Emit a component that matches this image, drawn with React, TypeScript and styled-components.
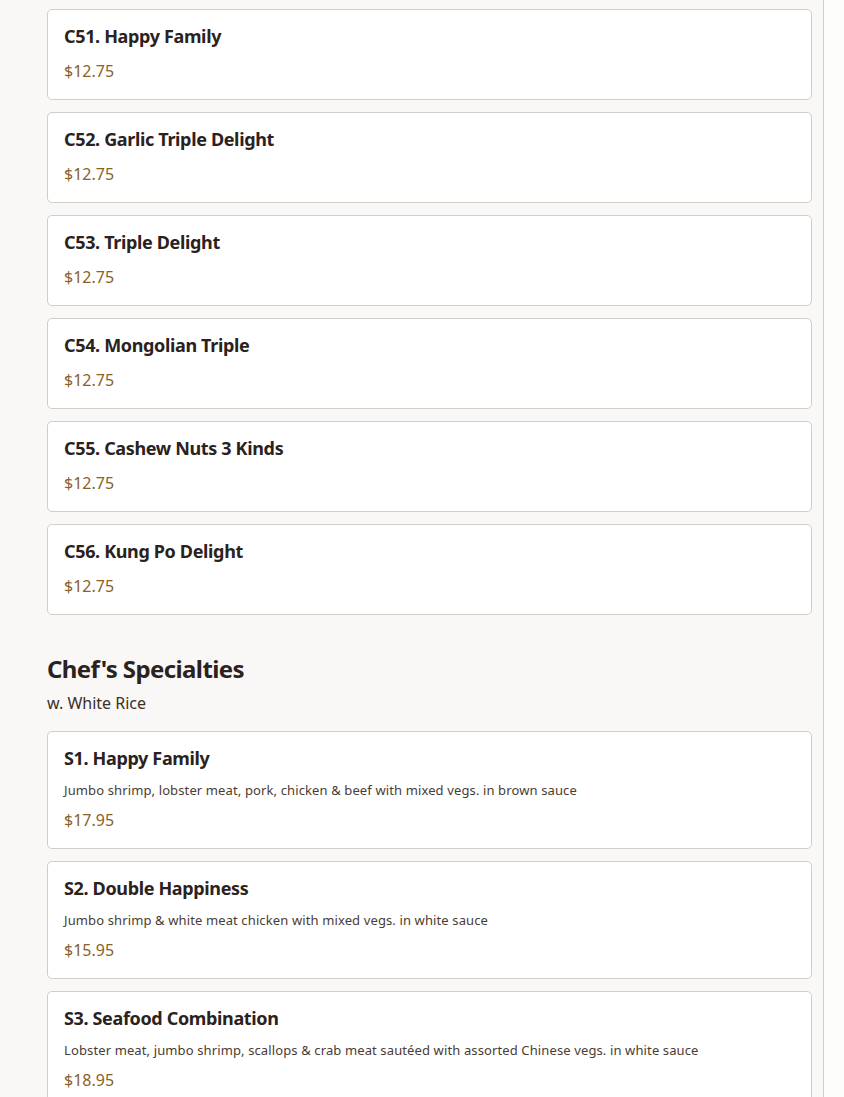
import React from "react";
import styled, { createGlobalStyle } from "styled-components";

const GlobalStyle = createGlobalStyle`
  *, *::before, *::after {
    box-sizing: border-box;
  }
  html, body {
    margin: 0;
    padding: 0;
    background: #fdfdfc;
  }
  body {
    font-family: "Noto Sans", "Open Sans", sans-serif;
    color: #2b221d;
  }
`;

const Page = styled.div`
  display: flex;
  min-height: 1097px;
`;

const Main = styled.main`
  width: 824px;
  padding: 9px 11px 40px 47px;
  background: #f9f8f6;
  border-right: 1px solid #d3d0cd;
  display: flex;
  flex-direction: column;
`;

const Section = styled.section`
  display: flex;
  flex-direction: column;
  & + & {
    margin-top: 39px;
  }
`;

const SectionHeading = styled.h2`
  margin: 0;
  font-size: 24px;
  line-height: 29px;
  font-weight: 700;
  letter-spacing: -0.6px;
  color: #2b221d;
`;

const SectionNote = styled.p`
  margin: 8px 0 16px;
  font-size: 16px;
  line-height: 24px;
  color: #3a2f29;
`;

const List = styled.div`
  display: flex;
  flex-direction: column;
  gap: 12px;
`;

const Card = styled.article`
  background: #ffffff;
  border: 1px solid #d2cdc8;
  border-radius: 5px;
  padding: 16px;
  display: flex;
  flex-direction: column;
`;

const ItemName = styled.h3`
  margin: 0;
  font-size: 18px;
  line-height: 20px;
  font-weight: 700;
  letter-spacing: -0.35px;
  color: #2b221d;
`;

const ItemDesc = styled.p`
  margin: 12px 0 0;
  font-size: 13px;
  line-height: 20px;
  letter-spacing: 0.12px;
  color: #4a3c35;
`;

const Price = styled.div<{ $tight?: boolean }>`
  margin-top: ${(p) => (p.$tight ? "8px" : "13px")};
  font-size: 16px;
  line-height: 24px;
  color: #8a6128;
`;

type Item = { name: string; price: string; desc?: string };

const combos: Item[] = [
  { name: "C51. Happy Family", price: "$12.75" },
  { name: "C52. Garlic Triple Delight", price: "$12.75" },
  { name: "C53. Triple Delight", price: "$12.75" },
  { name: "C54. Mongolian Triple", price: "$12.75" },
  { name: "C55. Cashew Nuts 3 Kinds", price: "$12.75" },
  { name: "C56. Kung Po Delight", price: "$12.75" },
];

const specialties: Item[] = [
  {
    name: "S1. Happy Family",
    desc: "Jumbo shrimp, lobster meat, pork, chicken & beef with mixed vegs. in brown sauce",
    price: "$17.95",
  },
  {
    name: "S2. Double Happiness",
    desc: "Jumbo shrimp & white meat chicken with mixed vegs. in white sauce",
    price: "$15.95",
  },
  {
    name: "S3. Seafood Combination",
    desc: "Lobster meat, jumbo shrimp, scallops & crab meat sautéed with assorted Chinese vegs. in white sauce",
    price: "$18.95",
  },
];

const MenuCard = ({ item }: { item: Item }) => (
  <Card>
    <ItemName>{item.name}</ItemName>
    {item.desc && <ItemDesc>{item.desc}</ItemDesc>}
    <Price $tight={!!item.desc}>{item.price}</Price>
  </Card>
);

export default function App() {
  return (
    <>
      <GlobalStyle />
      <Page>
        <Main>
          <Section>
            <List>
              {combos.map((it) => (
                <MenuCard key={it.name} item={it} />
              ))}
            </List>
          </Section>
          <Section>
            <SectionHeading>Chef's Specialties</SectionHeading>
            <SectionNote>w. White Rice</SectionNote>
            <List>
              {specialties.map((it) => (
                <MenuCard key={it.name} item={it} />
              ))}
            </List>
          </Section>
        </Main>
      </Page>
    </>
  );
}
